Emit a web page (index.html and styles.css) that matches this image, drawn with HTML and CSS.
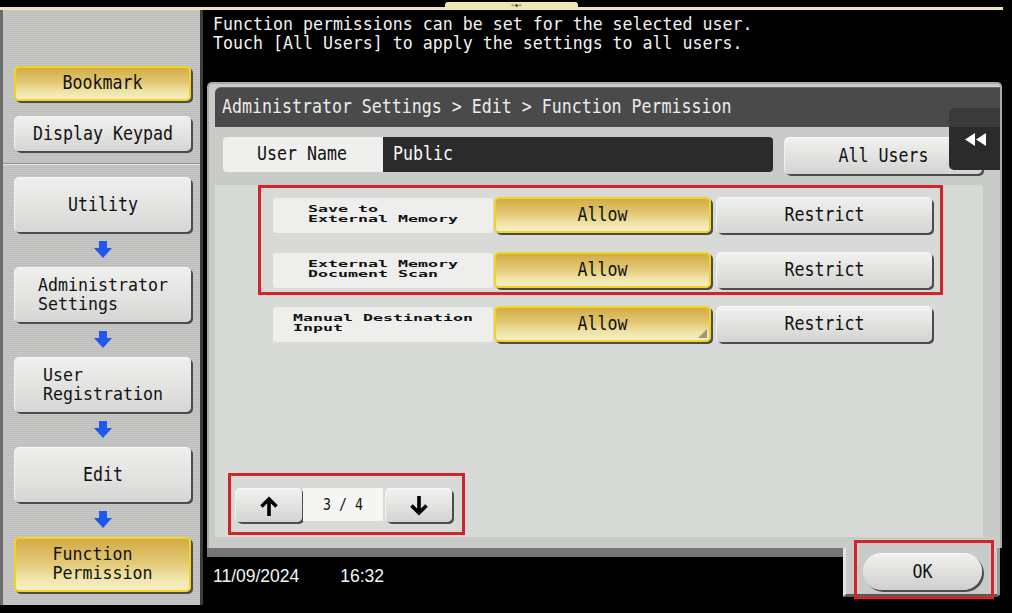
FILE: index.html
```html
<!DOCTYPE html>
<html lang="en">
<head>
<meta charset="utf-8">
<title>Function Permission</title>
<link rel="stylesheet" href="styles.css">
</head>
<body>
<div class="screen">
  <div class="topbar"><div class="grip">«◆»</div></div>
  <div class="main">
    <aside class="side">
      <div class="side-top">
        <div class="sbtn short yellow"><span class="t">Bookmark</span></div>
        <div class="sbtn short"><span class="t">Display Keypad</span></div>
      </div>
      <div class="side-div"></div>
      <div class="side-flow">
        <div class="sbtn big"><span class="t">Utility</span></div>
        <div class="flow-arrow"><svg width="18" height="17" viewBox="0 0 18 17"><path d="M5 0h8v7h5l-9 10L0 7h5z" fill="#1f58ea"/></svg></div>
        <div class="sbtn big"><span class="t multi">Administrator<br>Settings</span></div>
        <div class="flow-arrow"><svg width="18" height="17" viewBox="0 0 18 17"><path d="M5 0h8v7h5l-9 10L0 7h5z" fill="#1f58ea"/></svg></div>
        <div class="sbtn big"><span class="t multi">User<br>Registration</span></div>
        <div class="flow-arrow"><svg width="18" height="17" viewBox="0 0 18 17"><path d="M5 0h8v7h5l-9 10L0 7h5z" fill="#1f58ea"/></svg></div>
        <div class="sbtn big"><span class="t">Edit</span></div>
        <div class="flow-arrow"><svg width="18" height="17" viewBox="0 0 18 17"><path d="M5 0h8v7h5l-9 10L0 7h5z" fill="#1f58ea"/></svg></div>
        <div class="sbtn big yellow"><span class="t multi">Function<br>Permission</span></div>
      </div>
    </aside>
    <section class="content">
      <div class="msg"><span class="t multi">Function permissions can be set for the selected user.<br>Touch [All Users] to apply the settings to all users.</span></div>
      <div class="panel">
        <div class="crumb"><span class="t">Administrator Settings &gt; Edit &gt; Function Permission</span></div>
        <div class="collapse-tab"><svg width="22" height="13" viewBox="0 0 22 13"><path d="M0 6.5L10 0v13zM11 6.5L21 0v13z" fill="#fff"/></svg></div>
        <div class="user-row">
          <div class="user-lbl"><span class="t">User Name</span></div>
          <div class="user-val"><span class="t">Public</span></div>
          <div class="gbtn all-users"><span class="t">All Users</span></div>
        </div>
        <div class="list">
          <div class="hl">
            <div class="row">
              <div class="lbl"><span class="st">Save to<br>External Memory</span></div>
              <div class="choice allow"><span class="t">Allow</span></div>
              <div class="choice gbtn"><span class="t">Restrict</span></div>
            </div>
            <div class="row">
              <div class="lbl"><span class="st">External Memory<br>Document Scan</span></div>
              <div class="choice allow"><span class="t">Allow</span></div>
              <div class="choice gbtn"><span class="t">Restrict</span></div>
            </div>
          </div>
          <div class="row row3">
            <div class="lbl"><span class="st">Manual Destination<br>Input</span></div>
            <div class="choice allow corner"><span class="t">Allow</span></div>
            <div class="choice gbtn"><span class="t">Restrict</span></div>
          </div>
          <div class="pager">
            <div class="gbtn pbtn"><svg width="20" height="22" viewBox="0 0 20 22"><path d="M10 21V4M2.5 11.5L10 4l7.5 7.5" stroke="#000" stroke-width="3.6" fill="none"/></svg></div>
            <div class="pnum"><span class="pt">3 / 4</span></div>
            <div class="gbtn pbtn"><svg width="20" height="22" viewBox="0 0 20 22"><path d="M10 1v17M2.5 10.5L10 18l7.5-7.5" stroke="#000" stroke-width="3.6" fill="none"/></svg></div>
          </div>
        </div>
      </div>
      <div class="foot">
        <div class="datetime"><span>11/09/2024</span><span class="time">16:32</span></div>
        <div class="ok-area">
          <div class="ok-btn"><span class="t">OK</span></div>
          <div class="mark"></div>
        </div>
      </div>
    </section>
  </div>
</div>
</body>
</html>
```

FILE: styles.css
```css
* { box-sizing: border-box; }
html, body { margin: 0; padding: 0; background: #000; }
body {
  width: 1012px;
  height: 613px;
  overflow: hidden;
  font-family: "DejaVu Sans Mono", "Liberation Mono", monospace;
  color: #111;
}
.screen { width: 1012px; height: 613px; display: flex; flex-direction: column; }

.topbar {
  width: 1003px;
  height: 10px;
  border-bottom: 3px solid #eee6b4;
}
.grip {
  margin: 2px 0 0 445px;
  width: 133px;
  height: 5px;
  background: #eee6b4;
  border-radius: 3px 3px 0 0;
  font-size: 6px;
  line-height: 6px;
  text-align: center;
  color: #444;
  padding-left: 10px;
}

.main { display: flex; height: 603px; }

/* text helpers */
.t {
  display: inline-block;
  transform: scaleY(1.2);
  font-size: 16.6px;
  line-height: 16.7px;
  white-space: nowrap;
}
.t.multi {
  transform: scaleY(1.03);
  line-height: 19.4px;
  text-align: left;
}
.st {
  display: inline-block;
  transform: scaleY(0.51);
  font-size: 16.6px;
  line-height: 19.6px;
  font-weight: bold;
  text-align: left;
  white-space: nowrap;
  color: #111;
}

/* sidebar */
.side {
  width: 203px;
  height: 595px;
  border-left: 3px solid #6b6b6b;
  border-right: 3px solid #3b3b3b;
  background: repeating-linear-gradient(180deg, #c7c7c5 0 1px, #bdbdbb 1px 2px);
  display: flex;
  flex-direction: column;
}
.side-top {
  height: 153px;
  padding: 56px 0 0 11px;
  display: flex;
  flex-direction: column;
  gap: 15px;
}
.side-div { height: 2px; background: linear-gradient(180deg, #8a8a8a 50%, #ececec 50%); }
.side-flow { padding: 12px 0 0 11px; display: flex; flex-direction: column; }

.sbtn {
  width: 177px;
  display: flex;
  align-items: center;
  justify-content: center;
  border-radius: 5px;
  background: linear-gradient(180deg, #efefed 0%, #e3e4e2 50%, #d6d7d4 100%);
  border-top: 1px solid #f7f7f7;
  border-left: 1px solid #f3f3f3;
  box-shadow: 2px 2px 0 #4c4c4c;
}
.sbtn.short { height: 35px; }
.sbtn.big { height: 55px; }
.yellow, .allow {
  background: linear-gradient(180deg, #d2ac46 0%, #e2c774 45%, #efe3a6 75%, #f5efc6 100%);
  border: 2px solid #f2d41c;
  box-shadow: 2px 2px 0 #4c4c4c;
}
.flow-arrow { height: 35px; width: 177px; display: flex; align-items: center; justify-content: center; }

/* right content */
.content { width: 809px; display: flex; flex-direction: column; }
.msg {
  height: 72px;
  padding: 5px 0 0 10px;
  color: #f2f2f2;
}

.panel {
  margin-left: 4px;
  width: 795px;
  height: 466px;
  border: 2px solid #a9aba8;
  border-bottom: none;
  border-radius: 5px 5px 0 0;
  background: #c9cbc8;
  padding: 3px 0 0 6px;
  position: relative;
  display: flex;
  flex-direction: column;
}
.crumb {
  height: 40px;
  background: #4a4a4a;
  border-radius: 6px 0 0 0;
  border-top: 1px solid #6a6a6a;
  color: #ececec;
  padding-left: 7px;
  display: flex;
  align-items: center;
}
.collapse-tab {
  position: absolute;
  right: 0;
  top: 24px;
  width: 51px;
  height: 62px;
  background: linear-gradient(180deg, #3b3b3b 0 30%, #2b2b2b 30% 100%);
  border-radius: 5px 0 0 5px;
  display: flex;
  align-items: center;
  justify-content: center;
  padding-left: 3px;
  z-index: 2;
}

.user-row {
  margin-top: 10px;
  height: 37px;
  display: flex;
  align-items: flex-start;
  padding-left: 8px;
}
.user-lbl {
  width: 160px;
  height: 35px;
  background: #efefee;
  border-radius: 4px 0 0 4px;
  padding-left: 34px;
  display: flex;
  align-items: center;
}
.user-val {
  width: 390px;
  height: 35px;
  background: #2b2b2b;
  border-radius: 0 4px 4px 0;
  color: #fafafa;
  padding-left: 10px;
  display: flex;
  align-items: center;
}
.gbtn {
  display: flex;
  align-items: center;
  justify-content: center;
  border-radius: 5px;
  background: linear-gradient(180deg, #f0f0ee 0%, #e2e3e1 50%, #d3d4d1 100%);
  border-top: 1px solid #f8f8f8;
  border-left: 1px solid #f2f2f2;
  box-shadow: 2px 2px 0 #4c4c4c;
}
.all-users { margin-left: 11px; width: 198px; height: 37px; }

.list {
  margin-top: 11px;
  width: 768px;
  height: 352px;
  background: #d8dad7;
  border-radius: 0 4px 0 0;
  display: flex;
  flex-direction: column;
}
.hl {
  margin-left: 43px;
  width: 685px;
  border: 3px solid #d3242e;
  padding: 9px 0 4px 12px;
  display: flex;
  flex-direction: column;
  gap: 19px;
}
.row { display: flex; align-items: center; height: 36px; }
.row3 { margin: 11px 0 0 58px; }
.lbl {
  width: 220px;
  height: 35px;
  background: #eeeeed;
  border-radius: 3px;
  margin-right: 1px;
  display: flex;
  align-items: center;
  justify-content: center;
}
.choice { width: 217px; height: 36px; border-radius: 5px; display: flex; align-items: center; justify-content: center; }
.choice.gbtn { width: 216px; margin-left: 5px; }
.corner { position: relative; }
.corner::after {
  content: "";
  position: absolute;
  right: 2px;
  bottom: 2px;
  border-left: 9px solid transparent;
  border-bottom: 9px solid #9d9884;
}

.pager {
  margin: auto 0 2px 13px;
  width: 237px;
  height: 62px;
  border: 3px solid #d3242e;
  padding: 12px 0 0 4px;
  display: flex;
  align-items: flex-start;
}
.pbtn { width: 67px; height: 34px; }
.pnum {
  width: 80px;
  height: 33px;
  margin: 0 2px 0 1px;
  background: #f5f5f3;
  display: flex;
  align-items: center;
  justify-content: center;
}
.pt { display: inline-block; transform: scaleY(1.2); font-size: 13.3px; line-height: 14px; }

.foot { height: 55px; display: flex; }
.datetime {
  width: 640px;
  margin-left: 4px;
  border-top: 9px solid #777876;
  padding: 9px 0 0 6px;
  font-family: "Liberation Sans", Arial, sans-serif;
  font-size: 17.5px;
  line-height: 20px;
  color: #f4f4f4;
}
.time { margin-left: 41px; }
.ok-area {
  width: 157px;
  height: 49px;
  margin-left: -4px;
  background: #c9cbc8;
  border-left: 3px solid #e3e4e1;
  border-right: 3px solid #9a9a98;
  border-bottom: 3px solid #5a5a5a;
  border-radius: 0 0 4px 0;
  position: relative;
}
.ok-btn {
  margin: 5px 0 0 17px;
  width: 119px;
  height: 37px;
  border-radius: 19px;
  background: linear-gradient(180deg, #f0f0ee 0%, #dfe0dd 50%, #cfd0cd 100%);
  border-top: 1px solid #f8f8f8;
  box-shadow: 2px 2px 0 #4c4c4c;
  display: flex;
  align-items: center;
  justify-content: center;
}
.mark {
  position: absolute;
  left: 8px;
  top: -8px;
  width: 140px;
  height: 59px;
  border: 3px solid #d3242e;
}
```
